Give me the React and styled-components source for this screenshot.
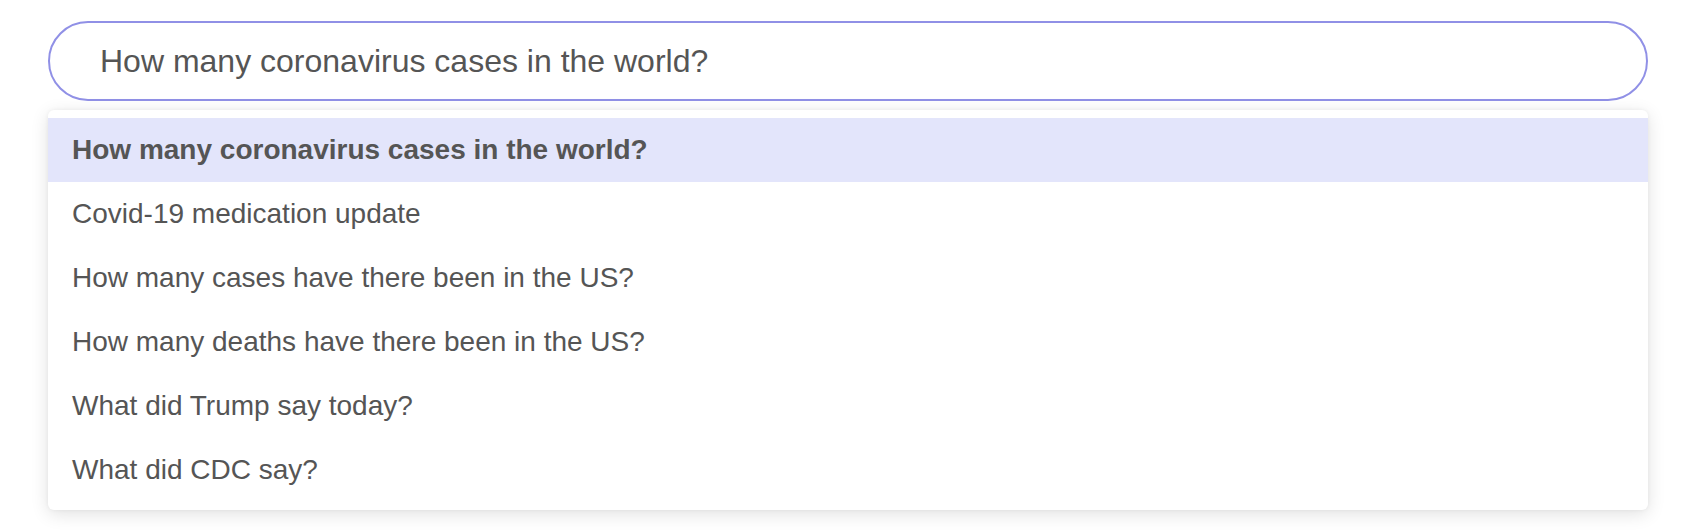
import styled, { createGlobalStyle } from "styled-components"

const GlobalStyle = createGlobalStyle`
body {
  margin: 0;
  background: #ffffff;
  font-family: "Liberation Sans", Arial, sans-serif;
}
`

const Container = styled.div`
width: 100%;
min-height: 100vh;
padding: 21px 52px 22px 48px;
box-sizing: border-box;
`

const SearchWrapper = styled.div`
width: 1600px;
display: flex;
flex-direction: column;
row-gap: 9px;
`

const SearchInput = styled.input`
box-sizing: border-box;
width: 100%;
height: 80px;
border: 2px solid #9090e6;
border-radius: 40px;
padding: 0 50px;
font-family: "Liberation Sans", Arial, sans-serif;
font-size: 32px;
color: #555555;
background: #ffffff;
outline: none;
`

const Menu = styled.ul`
list-style: none;
margin: 0;
padding: 8px 0;
background: #ffffff;
border-radius: 6px;
box-shadow: 0 4px 18px rgba(0, 0, 0, 0.12), 0 0 4px rgba(0, 0, 0, 0.05);
`

const Option = styled.li`
height: 64px;
display: flex;
align-items: center;
padding: 0 24px;
font-size: 28px;
color: #555555;
background: ${props => props.active ? "#e3e5fb" : "#ffffff"};
font-weight: ${props => props.active ? 700 : 400};
`

const suggestions = [
    "How many coronavirus cases in the world?",
    "Covid-19 medication update",
    "How many cases have there been in the US?",
    "How many deaths have there been in the US?",
    "What did Trump say today?",
    "What did CDC say?",
]

const App = () => {
    return (
        <Container>
            <GlobalStyle />
            <SearchWrapper>
                <SearchInput defaultValue="How many coronavirus cases in the world?" />
                <Menu>
                    {suggestions.map((text, i) => (
                        <Option key={text} active={i === 0}>{text}</Option>
                    ))}
                </Menu>
            </SearchWrapper>
        </Container>
    )
}

export default App
